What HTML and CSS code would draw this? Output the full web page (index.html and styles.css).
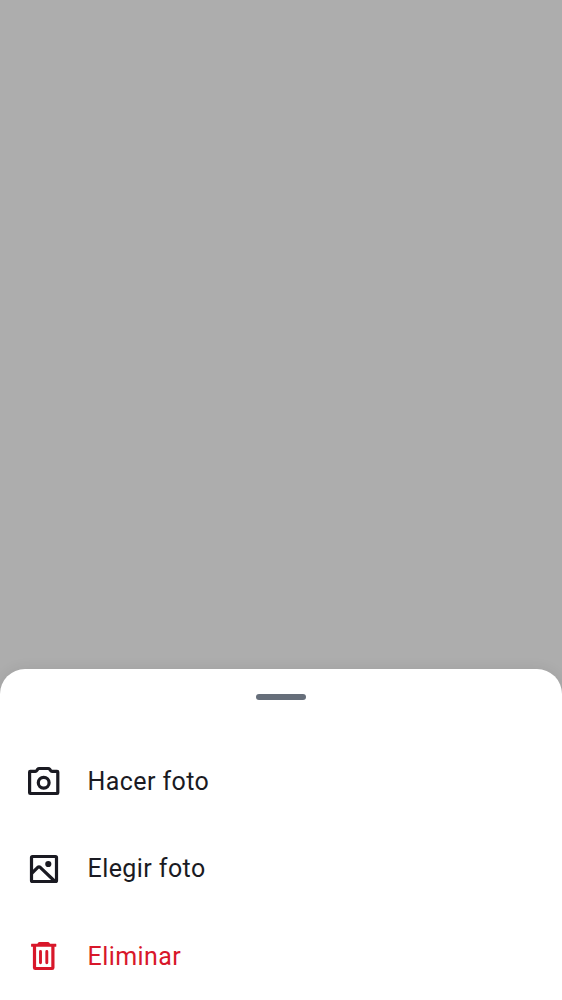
FILE: index.html
```
<!DOCTYPE html>
<html lang="es">
<head>
<meta charset="utf-8">
<title>Foto</title>
<link rel="stylesheet" href="styles.css">
</head>
<body>
<main class="scrim">
  <section class="sheet">
    <div class="handle"></div>
    <div class="menu">
      <div class="item">
        <svg class="icon" viewBox="0 0 38 38"><path d="M5.3 9.3H10.4Q11.3 9.3 11.9 8.4L12.7 7.3Q13.3 6.5 14.2 6.5H23.2Q24.1 6.5 24.7 7.3L25.5 8.4Q26.1 9.3 27 9.3H32.1Q32.8 9.3 32.8 10V30.8Q32.8 31.5 32.1 31.5H5.3Q4.6 31.5 4.6 30.8V10Q4.6 9.3 5.3 9.3Z"/><circle cx="18.7" cy="20.7" r="5.4"/></svg>
        <span class="label">Hacer foto</span>
      </div>
      <div class="item">
        <svg class="icon" viewBox="0 0 38 38"><rect x="6.5" y="6.5" width="25" height="25" rx="1"/><path d="M7 23L12.8 17.3Q14 16.3 15.2 17.3L29.5 31"/><circle class="solid" cx="23.3" cy="14" r="3.1"/></svg>
        <span>Elegir foto</span>
      </div>
      <div class="item danger">
        <svg class="icon" viewBox="0 0 38 38"><path d="M9.5 8V30.7Q9.5 31.5 10.3 31.5H27.1Q27.9 31.5 27.9 30.7V8"/><path class="solid" d="M6.4 6.8H12.4L13 5.8Q13.5 5 14.5 5H22.9Q23.9 5 24.4 5.8L25 6.8H31L31.3 7.2V9.4L31 9.8H6.4L6.1 9.4V7.2Z"/><path class="slots" d="M15.5 14.4V25.7M21.8 14.4V25.7"/></svg>
        <span class="label">Eliminar</span>
      </div>
    </div>
  </section>
</main>
</body>
</html>
```
FILE: styles.css
```
* { box-sizing: border-box; }
body { margin: 0; }
.scrim {
  height: 1000px;
  display: flex;
  flex-direction: column;
  justify-content: flex-end;
  background: #adadad;
  overflow: hidden;
}
.sheet {
  height: 331px;
  padding-top: 25px;
  background: #fff;
  border-radius: 25px 25px 0 0;
  box-shadow: 0 0 14px rgba(0, 0, 0, 0.08);
}
.handle {
  width: 50px;
  height: 6px;
  margin: 0 auto 37px;
  border-radius: 3px;
  background: #666e7a;
}
.menu {
  display: grid;
  grid-template-rows: 88px 88px 86px;
}
.item {
  display: flex;
  align-items: center;
  gap: 24.5px;
  padding-left: 25px;
  color: #1a1a22;
  font: 400 25px/36px Roboto, sans-serif;
  letter-spacing: 0.42px;
}
.label { padding-top: 2px; }
.danger { color: #d8172a; }
.icon {
  width: 38px;
  height: 38px;
  fill: none;
  stroke: currentColor;
  stroke-width: 3.2;
  stroke-linejoin: round;
}
.solid { fill: currentColor; stroke: none; }
.slots { stroke-width: 2.9; stroke-linecap: round; }
```
